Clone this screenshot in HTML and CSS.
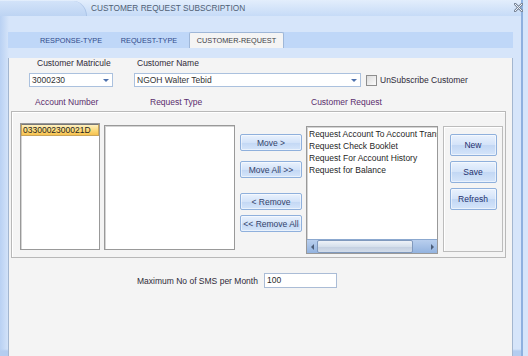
FILE: index.html
```html
<!DOCTYPE html>
<html lang="en">

<head>
  <meta charset="UTF-8">
  <title>Customer Request Subscription</title>
  <link rel="stylesheet" href="styles.css">
</head>

<body>
  <div class="window">
    <div class="titlebar">
      <div class="orb"></div>
      <span class="title">CUSTOMER REQUEST SUBSCRIPTION</span>
      <svg class="close" width="9" height="9" viewBox="0 0 9 9">
        <path d="M1 1 L8 8 M8 1 L1 8" stroke="#7b889b" stroke-width="2.6" stroke-linecap="square" />
        <path d="M1 1 L8 8 M8 1 L1 8" stroke="#eef3fa" stroke-width="1" />
      </svg>
    </div>

    <div class="frame">
      <div class="tabs">
        <div class="tab tab-response">RESPONSE-TYPE</div>
        <div class="tab tab-request">REQUEST-TYPE</div>
        <div class="tab tab-customer active">CUSTOMER-REQUEST</div>
      </div>

      <div class="page">
        <div class="row label-row">
          <span class="lbl-matricule">Customer Matricule</span>
          <span>Customer Name</span>
        </div>

        <div class="row combo-row">
          <div class="combo combo-matricule">
            <span>3000230</span>
            <span class="arrow"></span>
          </div>
          <div class="combo combo-name">
            <span>NGOH Walter Tebid</span>
            <span class="arrow"></span>
          </div>
          <span class="checkbox"></span>
          <span class="check-label">UnSubscribe Customer</span>
        </div>

        <div class="row label-row2">
          <span class="lbl-account">Account Number</span>
          <span class="lbl-reqtype">Request Type</span>
          <span>Customer Request</span>
        </div>

        <div class="group">
          <div class="list list-account">
            <div class="item selected">0330002300021D</div>
          </div>

          <div class="list list-reqtype"></div>

          <div class="move-buttons">
            <button class="btn btn-move">Move &gt;</button>
            <button class="btn btn-moveall">Move All &gt;&gt;</button>
            <button class="btn btn-remove">&lt; Remove</button>
            <button class="btn btn-removeall">&lt;&lt; Remove All</button>
          </div>

          <div class="list list-customer">
            <div class="items">
              <div class="item">Request Account To Account Transfer</div>
              <div class="item">Request Check Booklet</div>
              <div class="item">Request For Account History</div>
              <div class="item">Request for Balance</div>
            </div>
            <div class="hscroll">
              <span class="sb-arrow sb-left"></span>
              <span class="sb-thumb"></span>
              <span class="sb-track"></span>
              <span class="sb-arrow sb-right"></span>
            </div>
          </div>

          <div class="action-box">
            <button class="btn btn-action">New</button>
            <button class="btn btn-action">Save</button>
            <button class="btn btn-action">Refresh</button>
          </div>
        </div>

        <div class="row sms-row">
          <span class="lbl-sms">Maximum No of SMS per Month</span>
          <div class="textbox">100</div>
        </div>
      </div>
    </div>
  </div>
</body>

</html>
```

FILE: styles.css
```css
body {
  margin: 0;
  width: 528px;
  height: 356px;
  overflow: hidden;
  font-family: "Liberation Sans", Arial, sans-serif;
  font-size: 8.5px;
  color: #2f2a38;
  background-color: #d6e5fa;
}

.window {
  width: 521px;
  height: 356px;
  border-right: 2px solid #8eb0df;
  background: linear-gradient(to right, #b9d1f3 0, #cfe0f8 7px, #d6e5fa 9px);
  display: flex;
  flex-direction: column;
}

/* title bar */

.titlebar {
  height: 16px;
  display: flex;
  align-items: center;
  background: linear-gradient(#e3eefc, #c6dbf7);
}

.orb {
  width: 86px;
  height: 15px;
  margin-top: 1px;
  border-top-right-radius: 14px 15px;
  border-right: 1px solid #aac3e6;
  background: linear-gradient(#d3e3f9, #bdd4f3);
}

.title {
  margin-left: 4px;
  font-size: 8.3px;
  color: #4f5f75;
}

.close {
  margin-left: auto;
  margin-right: -2px;
  margin-top: -2px;
}

/* tabs */

.frame {
  flex: 1;
  padding: 16px 0 0 8px;
  background: linear-gradient(to bottom, transparent 333px, #b4cdf0 335px);
}

.tabs {
  width: 505px;
  height: 16px;
  display: flex;
  align-items: flex-end;
  background-color: #bfd7f8;
}

.tab {
  height: 16px;
  line-height: 17px;
  text-align: center;
  font-size: 7.3px;
  color: #30498a;
  box-sizing: border-box;
}

.tab-response {
  margin-left: 23px;
  width: 80px;
}

.tab-request {
  width: 76px;
}

.tab-customer {
  margin-left: 2px;
  width: 95px;
}

.tab.active {
  color: #3d3d45;
  background-color: #f4f4f4;
  border: 1px solid #9fb7d8;
  border-bottom: none;
  border-radius: 2px 2px 0 0;
  line-height: 15px;
}

/* page */

.page {
  width: 505px;
  height: 301px;
  box-sizing: border-box;
  background-color: #f4f4f4;
  border: 1px solid #a3b6cf;
  border-top: none;
}

.row {
  display: flex;
  align-items: center;
}

.label-row {
  height: 10px;
  margin-top: 10px;
  padding-left: 28px;
}

.lbl-matricule {
  width: 100px;
}

.combo-row {
  margin-top: 5px;
  padding-left: 20px;
  height: 14px;
}

.combo {
  height: 14px;
  box-sizing: border-box;
  border: 1px solid #abc1de;
  background-color: #fff;
  display: flex;
  align-items: center;
  padding-left: 2px;
  color: #333;
}

.combo-matricule {
  width: 84px;
}

.combo-name {
  width: 227px;
  margin-left: 21px;
}

.arrow {
  margin-left: auto;
  margin-right: 3px;
  width: 0;
  height: 0;
  border-left: 3px solid transparent;
  border-right: 3px solid transparent;
  border-top: 3px solid #4f72ad;
}

.checkbox {
  width: 11px;
  height: 11px;
  box-sizing: border-box;
  margin-left: 5px;
  border: 1px solid #8e8e8e;
  background: linear-gradient(135deg, #dcdcdc, #fbfbfb);
}

.check-label {
  margin-left: 3px;
}

.label-row2 {
  height: 10px;
  margin-top: 10px;
  padding-left: 26px;
  color: #5a2d6d;
}

.lbl-account {
  width: 115px;
}

.lbl-reqtype {
  width: 161px;
}

/* group box */

.group {
  width: 495px;
  height: 147px;
  margin: 4px 0 0 2px;
  box-sizing: border-box;
  border: 1px solid #b8b8b8;
  box-shadow: inset 1px 1px 0 #fff;
  display: flex;
  align-items: flex-start;
}

.list {
  box-sizing: border-box;
  border: 1px solid #999;
  box-shadow: inset 1px 1px 0 #d4d4d4;
  background-color: #fff;
  overflow: hidden;
}

.list-account {
  width: 80px;
  height: 127px;
  margin: 11px 0 0 8px;
}

.list-account .item {
  height: 12px;
  line-height: 12px;
  padding-left: 1px;
  color: #1f1f1f;
}

.item.selected {
  background: linear-gradient(#fff1c0, #fbd978 55%, #f7c24f);
  border: 1px solid #c9a55a;
  border-top-color: #777;
  line-height: 11px;
  height: 12px;
  box-sizing: border-box;
}

.list-reqtype {
  width: 131px;
  height: 125px;
  margin: 13px 0 0 4px;
}

.move-buttons {
  width: 62px;
  margin: 22px 0 0 5px;
  display: flex;
  flex-direction: column;
}

.btn {
  font-family: "Liberation Sans", Arial, sans-serif;
  font-size: 8.5px;
  color: #1f2d6e;
  padding: 0;
  border: 1px solid #8fb0dc;
  border-radius: 2px;
  background: linear-gradient(#eaf2fd, #d3e3f9 50%, #c2d7f4 51%, #d5e5fa);
  box-shadow: inset 0 0 0 1px rgba(255, 255, 255, 0.5);
}

.btn-move,
.btn-moveall,
.btn-remove,
.btn-removeall {
  height: 17px;
  color: #34436a;
}

.btn-moveall {
  margin-top: 10px;
}

.btn-remove {
  margin-top: 15px;
}

.btn-removeall {
  margin-top: 5px;
}

.list-customer {
  width: 132px;
  height: 128px;
  margin: 14px 0 0 4px;
  display: flex;
  flex-direction: column;
}

.items {
  flex: 1;
  padding: 1px 0 0 2px;
}

.items .item {
  height: 12px;
  line-height: 12px;
  white-space: nowrap;
  color: #1f1f1f;
}

.hscroll {
  height: 13px;
  display: flex;
  align-items: stretch;
  background: linear-gradient(#b9cfee, #93b3df);
  border-top: 1px solid #8ba8cf;
}

.sb-arrow {
  width: 10px;
  display: flex;
  align-items: center;
  justify-content: center;
}

.sb-left::before,
.sb-right::before {
  content: "";
  width: 0;
  height: 0;
  border-top: 3px solid transparent;
  border-bottom: 3px solid transparent;
}

.sb-left::before {
  border-right: 3px solid #4c5d78;
}

.sb-right::before {
  border-left: 3px solid #4c5d78;
}

.sb-thumb {
  width: 96px;
  box-sizing: border-box;
  border: 1px solid #8099bd;
  border-radius: 2px;
  background: linear-gradient(#eef2f8, #d6e0ec 50%, #c3cfe0 51%, #d2dcea);
}

.sb-track {
  flex: 1;
}

.action-box {
  width: 60px;
  height: 126px;
  margin: 14px 0 0 5px;
  box-sizing: border-box;
  border: 1px solid #bcbcbc;
  box-shadow: inset 1px 1px 0 #fff;
  display: flex;
  flex-direction: column;
  align-items: center;
  padding-top: 7px;
  gap: 5px;
}

.btn-action {
  width: 47px;
  height: 22px;
  color: #24306e;
}

/* sms */

.sms-row {
  margin-top: 15px;
  padding-left: 128px;
}

.lbl-sms {
  width: 127px;
}

.textbox {
  width: 73px;
  height: 15px;
  box-sizing: border-box;
  border: 1px solid #aabcd6;
  background-color: #fff;
  padding-left: 2px;
  line-height: 13px;
  color: #2a2a2a;
}
```
